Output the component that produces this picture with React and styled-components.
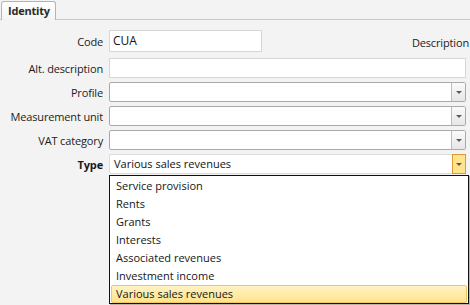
import React from 'react'
import styled, { createGlobalStyle } from 'styled-components'

const GlobalStyle = createGlobalStyle`
  body {
    margin: 0;
    background: #f3f3f3;
    font-family: "Open Sans", "Noto Sans", sans-serif;
    font-size: 11px;
    color: #1b1b1b;
  }
`

const Page = styled.div`
  position: relative;
  width: 470px;
  height: 305px;
  overflow: hidden;
  background: #f3f3f3;
`

const TabBar = styled.div`
  display: flex;
  align-items: flex-end;
  height: 19px;
  padding-left: 1px;
  border-bottom: 1px solid #c8c8c8;
`

const Tab = styled.div`
  height: 18px;
  line-height: 17px;
  padding: 0 5px 0 6px;
  margin-bottom: -1px;
  border: 1px solid #b4b4b4;
  border-bottom: none;
  border-radius: 3px 3px 0 0;
  background: linear-gradient(#ffffff, #f4f4f4);
  font-weight: 700;
  letter-spacing: -0.2px;
  color: #2a2a2a;
`

const Form = styled.div`
  display: flex;
  flex-direction: column;
  padding-top: 10px;
`

const Row = styled.div`
  display: flex;
  align-items: center;
  height: ${p => p.h || 20}px;
  margin-bottom: ${p => p.gap ?? 4}px;
`

const Label = styled.div`
  width: 103px;
  flex: none;
  padding-right: 6px;
  text-align: right;
  font-weight: ${p => (p.bold ? 700 : 400)};
  letter-spacing: -0.15px;
  white-space: nowrap;
`

const TextBox = styled.div`
  box-sizing: border-box;
  height: 100%;
  width: ${p => (p.w ? `${p.w}px` : 'auto')};
  flex: ${p => (p.w ? 'none' : 1)};
  margin-right: ${p => (p.w ? 0 : 4)}px;
  padding-left: 3px;
  line-height: 20px;
  background: #fff;
  border: 1px solid #d6d6d6;
  color: #101010;
  font-size: 12px;
`

const SideLabel = styled.div`
  margin-left: auto;
  margin-right: 1px;
  margin-top: 2px;
  letter-spacing: -0.15px;
`

const Combo = styled.div`
  box-sizing: border-box;
  flex: 1;
  display: flex;
  height: 100%;
  margin-right: 4px;
  background: #fff;
  border: 1px solid ${p => (p.open ? '#dcdcdc' : '#a9a9a9')};
  border-radius: 2px;
`

const ComboText = styled.div`
  flex: 1;
  padding-left: 4px;
  line-height: 18px;
  color: #111;
`

const DropButton = styled.div`
  box-sizing: border-box;
  width: 14px;
  margin: ${p => (p.open ? '-1px -1px -1px 0' : '0')};
  display: flex;
  align-items: center;
  justify-content: center;
  background: ${p =>
    p.open ? '#ffe48c' : 'linear-gradient(#fafafa, #e6e6e6)'};
  border: ${p => (p.open ? '1px solid #df9a36' : 'none')};
  border-left: 1px solid ${p => (p.open ? '#df9a36' : '#bdbdbd')};
  &::after {
    content: '';
    border-left: 3px solid transparent;
    border-right: 3px solid transparent;
    border-top: 3px solid #5a5a5a;
    margin-top: 1px;
  }
`

const List = styled.div`
  position: absolute;
  left: 109px;
  top: 175px;
  width: 360px;
  box-sizing: border-box;
  padding: 1px 1px 0 1px;
  background: #fff;
  border: 1px solid #111;
  box-shadow: 1px 1px 0 rgba(0, 0, 0, 0.25);
`

const Item = styled.div`
  box-sizing: border-box;
  height: 18px;
  line-height: 16px;
  padding-left: 4px;
  border: 1px solid ${p => (p.selected ? '#f0c862' : 'transparent')};
  border-radius: 2px;
  background: ${p =>
    p.selected ? 'linear-gradient(#fff3c4, #ffe38c)' : 'transparent'};
  color: #161616;
`

const types = [
  'Service provision',
  'Rents',
  'Grants',
  'Interests',
  'Associated revenues',
  'Investment income',
  'Various sales revenues',
]

const App = () => {
  return (
    <Page>
      <GlobalStyle />
      <TabBar>
        <Tab>Identity</Tab>
      </TabBar>
      <Form>
        <Row h={22} gap={6}>
          <Label>Code</Label>
          <TextBox w={153}>CUA</TextBox>
          <SideLabel>Description</SideLabel>
        </Row>
        <Row>
          <Label>Alt. description</Label>
          <TextBox />
        </Row>
        <Row>
          <Label>Profile</Label>
          <Combo>
            <ComboText />
            <DropButton />
          </Combo>
        </Row>
        <Row>
          <Label>Measurement unit</Label>
          <Combo>
            <ComboText />
            <DropButton />
          </Combo>
        </Row>
        <Row>
          <Label>VAT category</Label>
          <Combo>
            <ComboText />
            <DropButton />
          </Combo>
        </Row>
        <Row>
          <Label bold>Type</Label>
          <Combo open>
            <ComboText>Various sales revenues</ComboText>
            <DropButton open />
          </Combo>
        </Row>
      </Form>
      <List>
        {types.map(t => (
          <Item key={t} selected={t === 'Various sales revenues'}>
            {t}
          </Item>
        ))}
      </List>
    </Page>
  )
}

export default App
